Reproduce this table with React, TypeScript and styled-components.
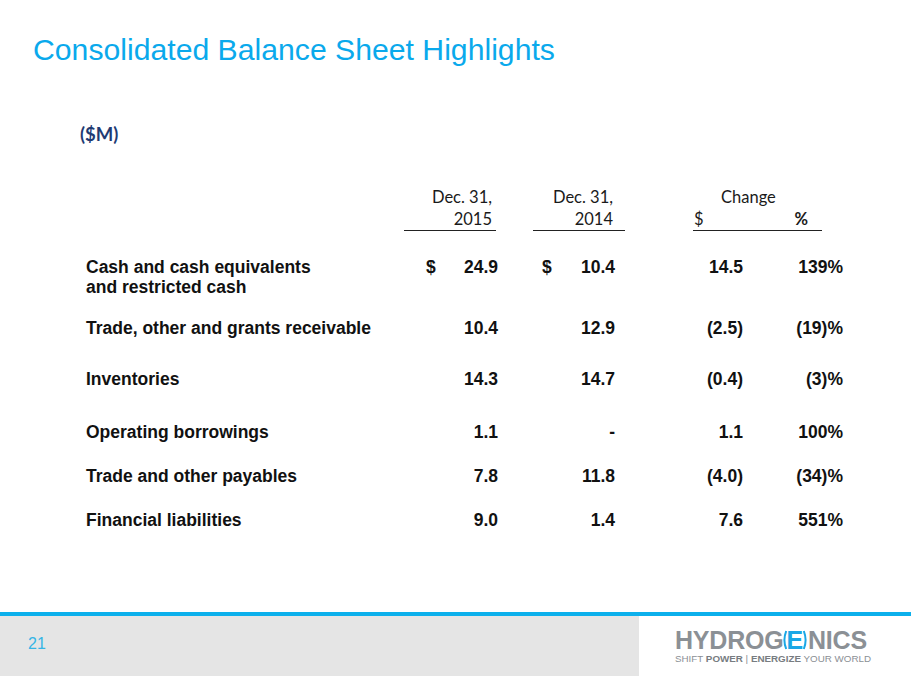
import React from "react";
import styled, { createGlobalStyle } from "styled-components";

const GlobalStyle = createGlobalStyle`
  html, body {
    margin: 0;
    padding: 0;
    background: #ffffff;
  }
  * {
    box-sizing: border-box;
  }
`;

type Item = {
  label: React.ReactNode;
  a: string;
  b: string;
  c: string;
  d: string;
  dollar?: boolean;
  gap: number;
};

const items: Item[] = [
  {
    label: (
      <>
        Cash and cash equivalents
        <br />
        and restricted cash
      </>
    ),
    a: "24.9",
    b: "10.4",
    c: "14.5",
    d: "139%",
    dollar: true,
    gap: 26,
  },
  { label: "Trade, other and grants receivable", a: "10.4", b: "12.9", c: "(2.5)", d: "(19)%", gap: 21 },
  { label: "Inventories", a: "14.3", b: "14.7", c: "(0.4)", d: "(3)%", gap: 31 },
  { label: "Operating borrowings", a: "1.1", b: "-", c: "1.1", d: "100%", gap: 33 },
  { label: "Trade and other payables", a: "7.8", b: "11.8", c: "(4.0)", d: "(34)%", gap: 24 },
  { label: "Financial liabilities", a: "9.0", b: "1.4", c: "7.6", d: "551%", gap: 24 },
];

const App = () => {
  return (
    <>
      <GlobalStyle />
      <Slide>
        <Main>
          <Title>Consolidated Balance Sheet Highlights</Title>
          <Unit>($M)</Unit>
          <Table>
            <HeadRow>
              <HeadCell col={2} pr={4}>
                Dec. 31,
                <br />
                2015
              </HeadCell>
              <HeadCell col={4} pr={12}>
                Dec. 31,
                <br />
                2014
              </HeadCell>
              <ChangeHead>
                <ChangeTitle>Change</ChangeTitle>
                <ChangeSub>
                  <span>$</span>
                  <Pct>%</Pct>
                </ChangeSub>
              </ChangeHead>
            </HeadRow>
            {items.map((it, i) => (
              <BodyRow key={i} gap={it.gap}>
                <Label>{it.label}</Label>
                <Amount pl={22} pr={0}>
                  <span>{it.dollar ? "$" : ""}</span>
                  <span>{it.a}</span>
                </Amount>
                <Amount pl={9} pr={10} col={4}>
                  <span>{it.dollar ? "$" : ""}</span>
                  <span>{it.b}</span>
                </Amount>
                <Value col={6}>{it.c}</Value>
                <Value col={7}>{it.d}</Value>
              </BodyRow>
            ))}
          </Table>
        </Main>
        <Footer>
          <PageArea>
            <PageNo>21</PageNo>
          </PageArea>
          <LogoArea>
            <Logo>
              <span>HYDROG</span>
              <LogoE>
                <svg width="5" height="20" viewBox="0 0 5 20">
                  <path d="M4.2 1 Q0.6 10 4.2 19" fill="none" stroke="#1aa7e6" strokeWidth="2" />
                </svg>
                <span>E</span>
                <svg width="5" height="20" viewBox="0 0 5 20">
                  <path d="M0.8 1 Q4.4 10 0.8 19" fill="none" stroke="#1aa7e6" strokeWidth="2" />
                </svg>
              </LogoE>
              <span>NICS</span>
            </Logo>
            <Tagline>
              SHIFT <b>POWER</b> | <b>ENERGIZE</b> YOUR WORLD
            </Tagline>
          </LogoArea>
        </Footer>
      </Slide>
    </>
  );
};

export default App;

const Slide = styled.div`
  width: 911px;
  height: 676px;
  display: flex;
  flex-direction: column;
  overflow: hidden;
  background: #ffffff;
`;

const Main = styled.div`
  flex: 1;
  display: flex;
  flex-direction: column;
`;

const Title = styled.h1`
  margin: 0;
  padding: 33px 0 0 33px;
  font-family: "Liberation Sans", Arial, sans-serif;
  font-weight: normal;
  font-size: 30.2px;
  line-height: 34px;
  color: #0aa9ec;
`;

const Unit = styled.div`
  margin-top: 56px;
  padding-left: 80px;
  font-family: Lato, "Open Sans", sans-serif;
  font-weight: bold;
  font-size: 18.5px;
  line-height: 22px;
  color: #1f3b73;
`;

const Table = styled.div`
  margin-top: 41px;
  padding-left: 86px;
  display: flex;
  flex-direction: column;
`;

const Grid = styled.div`
  display: grid;
  grid-template-columns: 318px 94px 35px 92px 68px 50px 100px;
`;

const HeadRow = styled(Grid)`
  font-family: Lato, "Open Sans", sans-serif;
  font-size: 16.5px;
  line-height: 22px;
  color: #1a1a1a;
`;

const HeadCell = styled.div<{ col: number; pr: number }>`
  grid-column: ${({ col }) => col};
  text-align: right;
  padding-right: ${({ pr }) => pr}px;
  border-bottom: 1px solid #222;
  margin-right: ${({ col }) => (col === 2 ? 2 : 0)}px;
`;

const ChangeHead = styled.div`
  grid-column: 6 / span 2;
  display: flex;
  flex-direction: column;
`;

const ChangeTitle = styled.div`
  padding-left: 28px;
`;

const ChangeSub = styled.div`
  width: 129px;
  display: flex;
  justify-content: space-between;
  padding: 0 15px 0 1px;
  border-bottom: 1px solid #222;
`;

const Pct = styled.span`
  font-weight: bold;
  letter-spacing: -1px;
`;

const BodyRow = styled(Grid)<{ gap: number }>`
  margin-top: ${({ gap }) => gap}px;
  font-family: "Liberation Sans", Arial, sans-serif;
  font-weight: bold;
  font-size: 17.5px;
  line-height: 20px;
  color: #111111;
`;

const Label = styled.div`
  grid-column: 1;
  white-space: nowrap;
`;

const Amount = styled.div<{ pl: number; pr: number; col?: number }>`
  grid-column: ${({ col }) => col ?? 2};
  display: flex;
  justify-content: space-between;
  align-items: flex-start;
  padding-left: ${({ pl }) => pl}px;
  padding-right: ${({ pr }) => pr}px;
`;

const Value = styled.div<{ col: number }>`
  grid-column: ${({ col }) => col};
  text-align: right;
  white-space: nowrap;
`;

const Footer = styled.div`
  height: 64px;
  border-top: 4px solid #0cb0ec;
  display: flex;
`;

const PageArea = styled.div`
  width: 639px;
  background: #e5e5e5;
  padding: 19px 0 0 28px;
`;

const PageNo = styled.div`
  font-family: "Liberation Sans", Arial, sans-serif;
  font-size: 16px;
  line-height: 18px;
  color: #35b5e5;
`;

const LogoArea = styled.div`
  flex: 1;
  background: #ffffff;
  padding: 12px 0 0 36px;
  display: flex;
  flex-direction: column;
`;

const Logo = styled.div`
  display: flex;
  align-items: center;
  height: 24px;
  font-family: "Liberation Sans", Arial, sans-serif;
  font-weight: bold;
  font-size: 25px;
  line-height: 24px;
  color: #8b9095;
  letter-spacing: -0.2px;
`;

const LogoE = styled.span`
  display: inline-flex;
  align-items: center;
  color: #1aa7e6;
  margin: 0 0 0 -2px;
`;

const Tagline = styled.div`
  margin-top: 2px;
  font-family: "Liberation Sans", Arial, sans-serif;
  font-size: 9.8px;
  line-height: 10px;
  color: #8b9095;
  white-space: nowrap;

  b {
    color: #777c81;
  }
`;
